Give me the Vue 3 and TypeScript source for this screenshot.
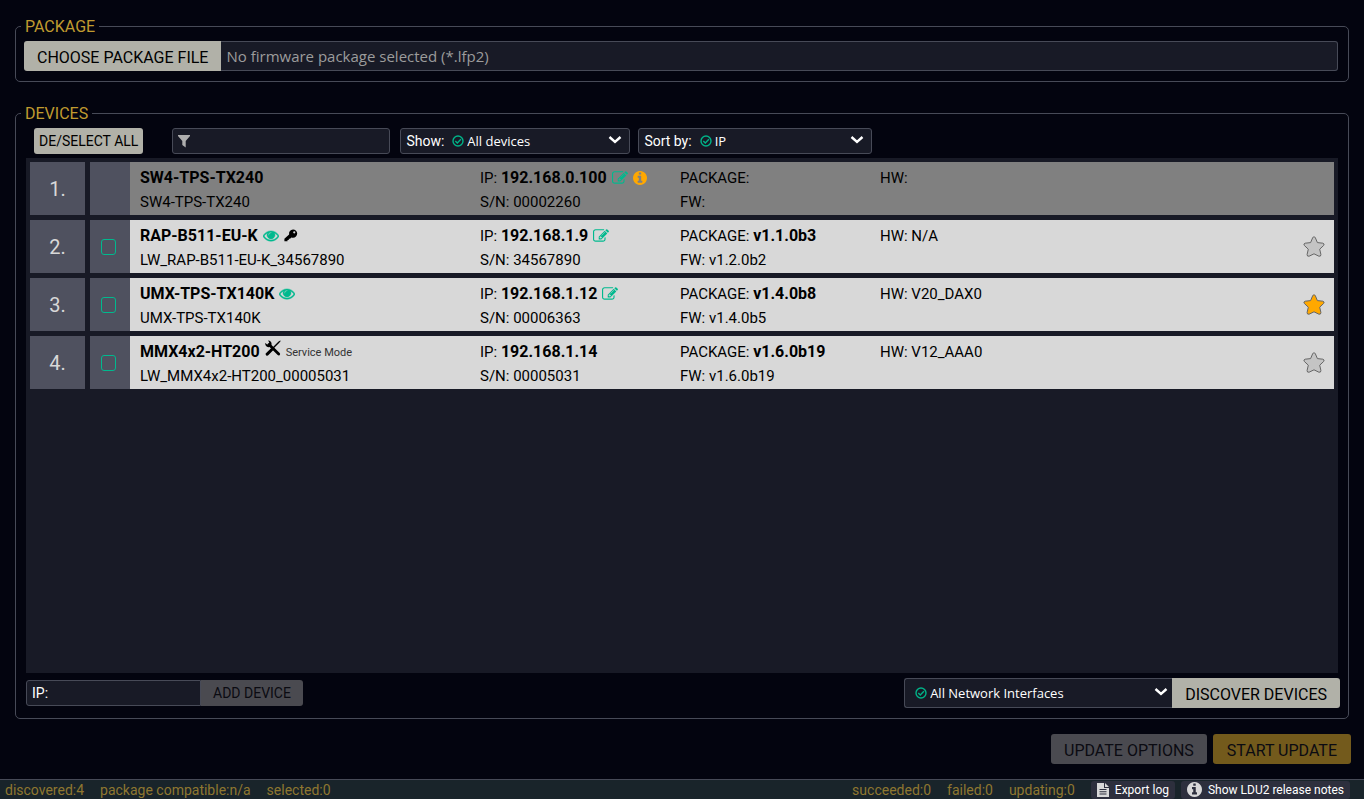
<script setup lang="ts">
import { ref } from 'vue'

interface Device {
  name: string
  alias: string
  ip: string
  serial: string
  pkg: string
  fw: string
  hw: string
  offline?: boolean
  identify?: boolean
  locked?: boolean
  service?: boolean
  editable?: boolean
  info?: boolean
  favorite?: boolean
}

const devices = ref<Device[]>([
  { name: 'SW4-TPS-TX240', alias: 'SW4-TPS-TX240', ip: '192.168.0.100', serial: '00002260', pkg: '', fw: '', hw: '', offline: true, editable: true, info: true },
  { name: 'RAP-B511-EU-K', alias: 'LW_RAP-B511-EU-K_34567890', ip: '192.168.1.9', serial: '34567890', pkg: 'v1.1.0b3', fw: 'v1.2.0b2', hw: 'N/A', identify: true, locked: true, editable: true },
  { name: 'UMX-TPS-TX140K', alias: 'UMX-TPS-TX140K', ip: '192.168.1.12', serial: '00006363', pkg: 'v1.4.0b8', fw: 'v1.4.0b5', hw: 'V20_DAX0', identify: true, editable: true, favorite: true },
  { name: 'MMX4x2-HT200', alias: 'LW_MMX4x2-HT200_00005031', ip: '192.168.1.14', serial: '00005031', pkg: 'v1.6.0b19', fw: 'v1.6.0b19', hw: 'V12_AAA0', service: true },
])

const selected = ref<string[]>([])
const filter = ref('')
const newIp = ref('')

function toggleAll() {
  const names = devices.value.filter((d) => !d.offline).map((d) => d.name)
  selected.value = selected.value.length ? [] : names
}

const eyePath = 'M1664 960q-152-236-381-353 61 104 61 225 0 185-131.500 316.500t-316.500 131.500-316.500-131.500-131.500-316.500q0-121 61-225-229 117-381 353 133 205 333.500 326.500t434.500 121.500 434.500-121.500 333.500-326.500zm-720-384q0-20-14-34t-34-14q-125 0-214.500 89.500t-89.500 214.500q0 20 14 34t34 14 34-14 14-34q0-86 61-147t147-61q20 0 34-14t14-34zm848 384q0 34-20 69-140 230-376.500 368.500t-499.500 138.500-499.500-139-376.500-368q-20-35-20-69t20-69q140-229 376.500-368t499.500-139 499.500 139 376.500 368q20 35 20 69z'
const editPath = 'M888 1184l116-116-152-152-116 116v56h96v96h56zm440-720q-16-16-33 1l-350 350q-17 17-1 33t33-1l350-350q17-17 1-33zm80 594v190q0 119-84.500 203.500t-203.500 84.500h-832q-119 0-203.500-84.500t-84.500-203.500v-832q0-119 84.500-203.500t203.500-84.500h832q63 0 117 25 15 7 18 23 3 17-9 29l-49 49q-14 14-32 8-23-6-45-6h-832q-66 0-113 47t-47 113v832q0 66 47 113t113 47h832q66 0 113-47t47-113v-126q0-13 9-22l64-64q15-15 35-7t20 29zm-96-738l288 288-672 672h-288v-288zm444 132l-92 92-288-288 92-92q28-28 68-28t68 28l152 152q28 28 28 68t-28 68z'
const infoPath = 'M1152 1376v-160q0-14-9-23t-23-9h-96v-512q0-14-9-23t-23-9h-320q-14 0-23 9t-9 23v160q0 14 9 23t23 9h96v320h-96q-14 0-23 9t-9 23v160q0 14 9 23t23 9h448q14 0 23-9t9-23zm-128-896v-160q0-14-9-23t-23-9h-192q-14 0-23 9t-9 23v160q0 14 9 23t23 9h192q14 0 23-9t9-23zm640 416q0 209-103 385.500t-279.500 279.500-385.500 103-385.500-103-279.500-279.500-103-385.500 103-385.500 279.500-279.500 385.500-103 385.500 103 279.500 279.500 103 385.500z'
</script>

<template>
  <div class="app">
    <main class="main">
      <fieldset class="panel package">
        <legend>PACKAGE</legend>
        <div class="file">
          <button class="btn large joined-left" type="button">CHOOSE PACKAGE FILE</button>
          <input class="file-name" type="text" readonly aria-label="Firmware package" placeholder="No firmware package selected (*.lfp2)" />
        </div>
      </fieldset>

      <fieldset class="panel devices">
        <legend>DEVICES</legend>
        <div class="toolbar">
          <button class="btn small" type="button" @click="toggleAll">DE/SELECT ALL</button>
          <div class="box filter">
            <svg width="12" height="13" viewBox="0 0 12 13" aria-hidden="true"><path d="M0 0h12v1L7.700 6v6.500L4.300 10V6L0 1z" fill="#aeaeae" /></svg>
            <input v-model="filter" type="text" aria-label="Filter devices" />
          </div>
          <div class="box show">
            <label for="show">Show:</label>
            <svg class="tick" width="12" height="12" viewBox="0 0 12 12" aria-hidden="true"><circle cx="6" cy="6" r="5" /><path d="M3.300 6l2 2L8.900 4.300" /></svg>
            <select id="show"><option>All devices</option><option>Favorites</option></select>
            <svg class="chevron" width="14" height="10" viewBox="0 0 14 10" aria-hidden="true"><path d="M1.500 2l5.500 5 5.500-5" /></svg>
          </div>
          <div class="box sort">
            <label for="sort">Sort by:</label>
            <svg class="tick" width="12" height="12" viewBox="0 0 12 12" aria-hidden="true"><circle cx="6" cy="6" r="5" /><path d="M3.300 6l2 2L8.900 4.300" /></svg>
            <select id="sort"><option>IP</option><option>Name</option></select>
            <svg class="chevron" width="14" height="10" viewBox="0 0 14 10" aria-hidden="true"><path d="M1.500 2l5.500 5 5.500-5" /></svg>
          </div>
        </div>

        <div class="list">
          <div v-for="(d, i) in devices" :key="d.name" class="row" :class="{ offline: d.offline }">
            <div class="num">{{ i + 1 }}.</div>
            <div class="check">
              <input v-if="!d.offline" v-model="selected" type="checkbox" :value="d.name" :aria-label="'Select ' + d.name" />
            </div>
            <div class="info">
              <div class="col">
                <div class="line">
                  <strong>{{ d.name }}</strong>
                  <svg v-if="d.identify" class="green eye" width="16" height="16" viewBox="0 60 1792 1792" aria-hidden="true"><path :d="eyePath" /></svg>
                  <svg v-if="d.locked" width="14" height="14" viewBox="0 0 14 14" aria-hidden="true"><path fill-rule="evenodd" d="M9 .4a4.200 4.200 0 0 1 0 8.400q-.9 0-1.700-.4L6.100 9.700H4.800V11H3.500v1.300H.4V9.800l4.700-4.400A4.200 4.200 0 0 1 9 .4zm1.200 1.800a1.100 1.100 0 1 0 .1 0z" /></svg>
                  <svg v-if="d.service" class="tools" width="16" height="16" viewBox="0 0 16 16" aria-hidden="true"><path d="M4 4.500L13.700 14" stroke="#000" stroke-width="2.800" stroke-linecap="round" /><path d="M3 .4a3.500 3.500 0 0 1 3.400 4.500L5.200 6.800A3.500 3.500 0 0 1 .3 3l2 1.500 1.600-.6.300-1.700z" /><path d="M7.600 7.600L13.300 1.800 15.200.4l.5.5-1.400 1.900-5.700 5.800z" /><path d="M6.300 8l2.100 2.100-4.900 5q-1.300 1.200-2.400.1t.1-2.300z" /></svg>
                  <span v-if="d.service" class="mode">Service Mode</span>
                </div>
                <div class="line">{{ d.alias }}</div>
              </div>
              <div class="col">
                <div class="line">
                  <span>IP: <strong>{{ d.ip }}</strong></span>
                  <button v-if="d.editable" class="icon green" type="button" :aria-label="'Edit IP of ' + d.name"><svg width="16" height="16" viewBox="0 0 1792 1792"><path :d="editPath" /></svg></button>
                  <svg v-if="d.info" class="orange" width="14" height="14" viewBox="128 128 1536 1536" aria-hidden="true"><path :d="infoPath" /></svg>
                </div>
                <div class="line">S/N: {{ d.serial }}</div>
              </div>
              <div class="col">
                <div class="line"><span>PACKAGE: <strong>{{ d.pkg }}</strong></span></div>
                <div class="line">FW: {{ d.fw }}</div>
              </div>
              <div class="col">
                <div class="line">HW: {{ d.hw }}</div>
              </div>
              <button v-if="!d.offline" class="icon star" :class="{ on: d.favorite }" type="button" :aria-label="'Favorite ' + d.name" @click="d.favorite = !d.favorite">
                <svg width="22" height="22" viewBox="0 0 22 22"><path d="M11 .8q.9 0 1.300.9l2.100 4.900 5.400.6q2.200.6.800 2.300l-3.900 3.700 1.200 5.300q.1 2.200-2 1.700L11 17.800l-4.900 2.400q-2.100.5-2-1.700l1.200-5.300L1.400 9.500Q0 7.800 2.200 7.200l5.400-.6 2.100-4.900q.4-.9 1.300-.9z" /></svg>
              </button>
            </div>
          </div>
        </div>

        <div class="bottom">
          <div class="box ip">
            <label for="ip">IP:</label>
            <input id="ip" v-model="newIp" type="text" />
          </div>
          <button class="btn small add" type="button" disabled>ADD DEVICE</button>
          <div class="box network">
            <svg class="tick" width="12" height="12" viewBox="0 0 12 12" aria-hidden="true"><circle cx="6" cy="6" r="5" /><path d="M3.300 6l2 2L8.900 4.300" /></svg>
            <select aria-label="Network interface"><option>All Network Interfaces</option></select>
            <svg class="chevron" width="14" height="10" viewBox="0 0 14 10" aria-hidden="true"><path d="M1.500 2l5.500 5 5.500-5" /></svg>
          </div>
          <button class="btn large joined-right" type="button">DISCOVER DEVICES</button>
        </div>
      </fieldset>

      <div class="actions">
        <button class="btn large" type="button" disabled>UPDATE OPTIONS</button>
        <button class="btn large start" type="button" disabled>START UPDATE</button>
      </div>
    </main>

    <footer class="status">
      <span>discovered:4</span>
      <span>package compatible:n/a</span>
      <span>selected:{{ selected.length }}</span>
      <span class="right">succeeded:0</span>
      <span>failed:0</span>
      <span>updating:0</span>
      <div class="links">
        <button type="button">
          <svg width="12" height="14" viewBox="0 0 12 14" aria-hidden="true"><path fill-rule="evenodd" d="M0 0h7v5h5v9H0zM8 0l4 4H8zM2.500 6v1h7V6zm0 2.300v1h7v-1zm0 2.300v1h7v-1z" /></svg>Export log
        </button>
        <button type="button">
          <svg width="15" height="15" viewBox="128 128 1536 1536" aria-hidden="true"><path :d="infoPath" /></svg>Show LDU2 release notes
        </button>
      </div>
    </footer>
  </div>
</template>

<style>
body {
  margin: 0;
  background: #03040f;
}
</style>

<style scoped>
.app {
  display: flex;
  flex-direction: column;
  min-height: 100vh;
  box-sizing: border-box;
  background: #03040f;
  font: 15px/18px Roboto, sans-serif;
  color: #000;
}
.app * {
  box-sizing: border-box;
}
.app button,
.app input,
.app select {
  font: inherit;
  margin: 0;
}
.main {
  flex: 1;
  display: flex;
  flex-direction: column;
  padding: 17px 15px 15px;
}
.panel {
  min-width: 0;
  margin: 0 0 22px;
  border: 1px solid #474a57;
  border-radius: 5px;
  padding: 5px 10px 10px;
}
.package {
  padding-left: 8px;
}
.panel legend {
  margin-left: -5px;
  padding: 1px 4px 0;
  font-size: 16px;
  line-height: 18px;
  color: #c09b30;
}
.package legend {
  margin-left: -3px;
}
.file {
  display: flex;
  height: 30px;
}
.app .btn {
  border: 0;
  border-radius: 3px;
  background: #b1b1a8;
  color: #000;
  white-space: nowrap;
}
.app .btn.large {
  height: 30px;
  padding: 3px 13px 0;
  font-size: 16px;
}
.app .btn.small {
  height: 26px;
  padding: 0 5px;
  font-size: 14px;
}
.app .btn:disabled {
  background: #4a4a50;
  color: #0b0b12;
}
.app .btn.start:disabled {
  padding: 3px 14px 0;
  background: #735a1c;
}
.app .btn.joined-left {
  border-radius: 3px 0 0 3px;
}
.app .btn.joined-right {
  border-radius: 0 3px 3px 0;
}
.app .file-name {
  flex: 1;
  min-width: 0;
  border: 1px solid #474a57;
  border-left: 0;
  border-radius: 0 3px 3px 0;
  background: #181a26;
  padding: 0 5px;
  font: 15px "Open Sans", sans-serif;
}
.file-name::placeholder {
  color: #9c9c9c;
  opacity: 1;
}
.devices {
  margin-bottom: 15px;
}
.toolbar {
  display: flex;
  align-items: center;
  height: 26px;
  padding-left: 8px;
  margin-bottom: 4px;
}
.box {
  position: relative;
  display: flex;
  align-items: center;
  height: 26px;
  border: 1px solid #474a57;
  border-radius: 3px;
  background: #181a26;
  color: #fff;
  padding: 0 5px;
  font-size: 14px;
}
.box input {
  flex: 1;
  min-width: 0;
  border: 0;
  outline: 0;
  background: none;
  color: #fff;
}
.app .box select {
  flex: 1;
  min-width: 0;
  height: 100%;
  appearance: none;
  border: 0;
  outline: 0;
  background: none;
  color: #fff;
  padding: 0 20px 0 3px;
  font: 13px "Open Sans", sans-serif;
}
.box option {
  background: #181a26;
}
.filter {
  width: 218px;
  margin: 0 10px 0 29px;
}
.show {
  width: 230px;
  margin-right: 8px;
}
.sort {
  width: 234px;
}
.tick {
  flex: none;
  fill: none;
  stroke: #00b388;
  stroke-width: 1.4;
}
label + .tick {
  margin-left: 8px;
}
.chevron {
  position: absolute;
  right: 7px;
  top: 50%;
  margin-top: -6px;
  fill: none;
  stroke: #fff;
  stroke-width: 2.4;
  pointer-events: none;
}
/* Fills the window below the fixed-height bars and grows with its rows. */
.list {
  min-height: calc(100vh - 284px);
  display: flex;
  flex-direction: column;
  gap: 5px;
  padding: 4px;
  background: #181a26;
}
.row {
  display: flex;
  height: 53px;
}
.num,
.check {
  flex: none;
  display: flex;
  align-items: center;
  justify-content: center;
  background: #4f515f;
}
.num {
  width: 55px;
  margin-right: 5px;
  font-size: 20px;
  color: #d8d8d8;
}
.check {
  width: 40px;
}
.check input {
  appearance: none;
  width: 15px;
  height: 16px;
  border: 1px solid #00b98e;
  border-radius: 3px;
}
.app .check input {
  margin-right: 3px;
}
.check input:checked {
  background: #00b388;
}
.info {
  flex: 1;
  display: grid;
  grid-template-columns: 340px 200px 200px 1fr auto;
  padding: 4px 9px 0 10px;
  background: #d8d8d8;
}
.offline .info {
  background: #808080;
}
.line {
  display: flex;
  align-items: center;
  gap: 5px;
  height: 24px;
  white-space: nowrap;
}
.line strong {
  font-size: 16px;
}
.eye {
  stroke: #00b98e;
  stroke-width: 50;
}
.tools {
  align-self: flex-start;
}
.mode {
  font-size: 11px;
  padding-top: 2px;
  color: #333;
}
.app .icon {
  display: flex;
  border: 0;
  padding: 0;
  background: none;
}
.green {
  fill: #00b98e;
}
.orange {
  fill: #ffa800;
}
.app .star {
  align-self: center;
  margin-bottom: 4px;
  fill: #c4c4c4;
  stroke: #666;
}
.app .star.on {
  fill: #ffa800;
}
.bottom {
  display: flex;
  align-items: center;
  height: 30px;
  margin: 5px -2px 0 0;
}
.ip {
  width: 175px;
  border-radius: 3px 0 0 3px;
}
.app .btn.add {
  padding: 0 12px;
  border-radius: 0 3px 3px 0;
}
.network {
  width: 268px;
  height: 30px;
  margin-left: auto;
  padding-left: 10px;
  border-right: 0;
  border-radius: 3px 0 0 3px;
}
.network .chevron {
  right: 4px;
}
.actions {
  display: flex;
  justify-content: flex-end;
  gap: 6px;
  margin-right: -2px;
}
.status {
  display: flex;
  align-items: center;
  gap: 16px;
  height: 20px;
  padding: 0 14px 0 5px;
  border-top: 1px solid #474a57;
  background: #19242a;
  color: #8f7730;
  font-size: 14px;
}
.status .right {
  margin-left: auto;
}
.links {
  display: flex;
  gap: 6px;
}
.links button {
  display: flex;
  align-items: center;
  gap: 6px;
  height: 18px;
  border: 0;
  border-radius: 3px;
  background: #2d2f3d;
  color: #fff;
  fill: #d8d8d8;
  padding: 0 6px;
  white-space: nowrap;
}
.app .links button {
  font-size: 12px;
}
</style>
